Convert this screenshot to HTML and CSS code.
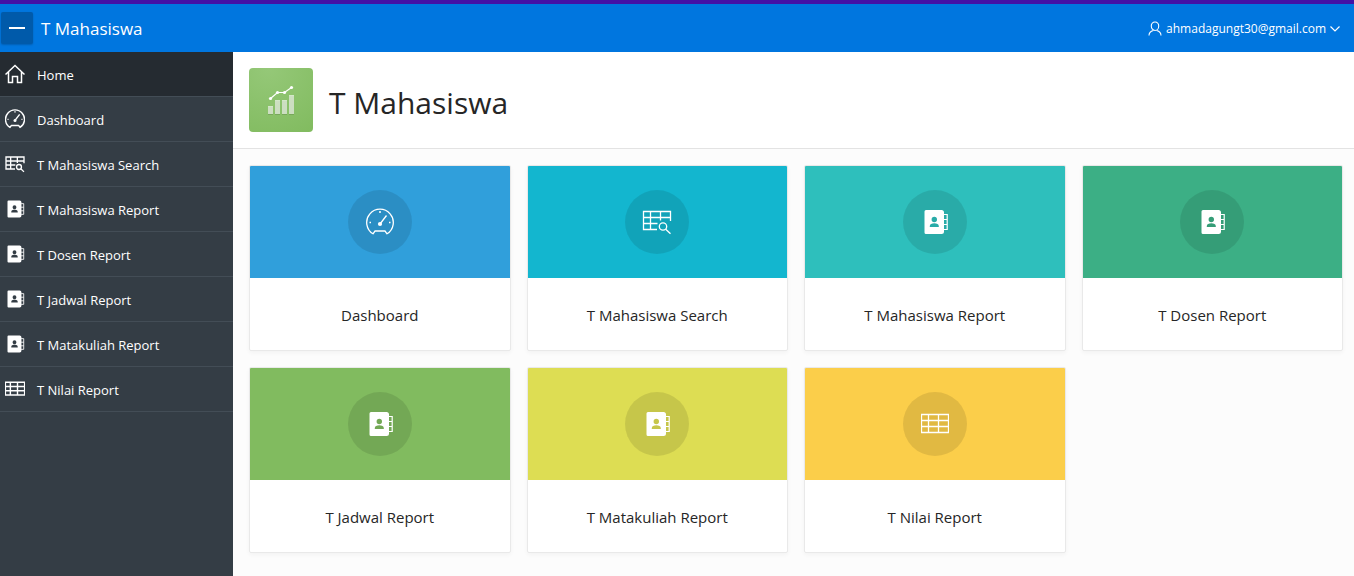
FILE: index.html
```html
<!DOCTYPE html>
<html lang="en">
<head>
<meta charset="utf-8">
<title>T Mahasiswa</title>
<link rel="stylesheet" href="styles.css">
</head>
<body>
<svg class="sprite" aria-hidden="true">
  <symbol id="i-home" viewBox="0 0 20 20"><path d="M.5 10.5 10 1.5l9.500 9M3.500 8v10.500h4V12.500h5v6h4V8" fill="none" stroke="currentColor" stroke-width="1.500"/></symbol>
  <symbol id="i-gauge" viewBox="0 0 28 28"><path d="M7 25.800A13.300 13.300 0 1 1 21 25.800L19 23H9Z" fill="none" stroke="currentColor" stroke-linejoin="round"/><path d="M14 16 20.500 7.500M13 4h2M3.500 14.500h1.500M23 14.500h1.500" fill="none" stroke="currentColor"/><circle cx="14" cy="16" r="2.100" fill="currentColor"/></symbol>
  <symbol id="i-search" viewBox="0 0 30 28"><path d="M15 21.500H1.500v-18h27v9.500M1.500 9.500h27M1.500 15.500h14M8.500 3.500v18M18.500 3.500v9" fill="none" stroke="currentColor"/><circle cx="21" cy="18.500" r="3.700" fill="none" stroke="currentColor"/><path d="m23.700 21.200 4.800 4.600" stroke="currentColor"/></symbol>
  <symbol id="i-book" viewBox="0 0 28 28"><path fill="currentColor" fill-rule="evenodd" d="M5 2h15.500a2.500 2.500 0 0 1 2.500 2.500v19a2.500 2.500 0 0 1-2.500 2.500H5a1.500 1.500 0 0 1-1.500-1.500v-21A1.500 1.500 0 0 1 5 2Zm8.300 6.800a2.700 2.700 0 1 0 0 5.400 2.700 2.700 0 1 0 0-5.400ZM8.800 19h9v-1c0-2-2-2.800-4.500-2.800s-4.500.8-4.500 2.800Z"/><path d="M22.500 6.500h3.700v15h-3.700M22.500 11.500h3.700M22.500 16.500h3.700" fill="none" stroke="currentColor" stroke-width="1.200"/></symbol>
  <symbol id="i-table" viewBox="0 0 28 20"><path d="M.5 .5h27v18H.5ZM.5 6.500h27M.5 12.500h27M7.500.5v18M17.500.5v18" fill="none" stroke="currentColor"/></symbol>
  <symbol id="i-user" viewBox="0 0 14 16"><path d="M7 1a3.700 3.700 0 0 1 3.700 4.200C10.700 7.500 9 9.500 7 9.500S3.300 7.500 3.300 5.200A3.700 3.700 0 0 1 7 1ZM5.300 9.500c-2.800.8-4.300 2-4.300 5M8.700 9.500c2.800.8 4.300 2 4.300 5" fill="none" stroke="currentColor" stroke-width="1.100"/></symbol>
</svg>

<header class="topbar">
  <button class="toggle" type="button" aria-label="Toggle navigation"><span class="toggle-bar"></span></button>
  <a class="brand" href="#">T Mahasiswa</a>
  <button class="account" type="button">
    <svg class="account-icon"><use href="#i-user"/></svg>
    <span>ahmadagungt30@gmail.com</span>
    <svg class="chevron" viewBox="0 0 10 6"><path d="m.5.500 4.500 4.500L9.500.500" fill="none" stroke="currentColor" stroke-width="1.200"/></svg>
  </button>
</header>

<div class="layout">
  <nav class="sidebar">
    <a class="nav-item current" href="#"><svg class="nav-icon"><use href="#i-home"/></svg><span class="nav-label">Home</span></a>
    <a class="nav-item" href="#"><svg class="nav-icon"><use href="#i-gauge"/></svg><span class="nav-label">Dashboard</span></a>
    <a class="nav-item" href="#"><svg class="nav-icon"><use href="#i-search"/></svg><span class="nav-label">T Mahasiswa Search</span></a>
    <a class="nav-item" href="#"><svg class="nav-icon"><use href="#i-book"/></svg><span class="nav-label">T Mahasiswa Report</span></a>
    <a class="nav-item" href="#"><svg class="nav-icon"><use href="#i-book"/></svg><span class="nav-label">T Dosen Report</span></a>
    <a class="nav-item" href="#"><svg class="nav-icon"><use href="#i-book"/></svg><span class="nav-label">T Jadwal Report</span></a>
    <a class="nav-item" href="#"><svg class="nav-icon"><use href="#i-book"/></svg><span class="nav-label">T Matakuliah Report</span></a>
    <a class="nav-item" href="#"><svg class="nav-icon"><use href="#i-table"/></svg><span class="nav-label">T Nilai Report</span></a>
  </nav>

  <main class="content">
    <div class="hero">
      <div class="hero-icon">
        <svg viewBox="0 0 64 64"><g fill="#000" opacity=".12"><path d="M19 39h5v8h-5zM26 33h5v14h-5zM33 33h5v14h-5zM40 28h5v19h-5z"/></g><g fill="#fff" opacity=".62"><path d="M19 38h5v8h-5zM26 32h5v14h-5zM33 32h5v14h-5zM40 27h5v19h-5z"/></g><path d="m21.500 30.500 7-6h7l7-5" fill="none" stroke="#fff" stroke-width="1.200"/><g fill="#fff"><circle cx="21.500" cy="30.500" r="1.600"/><circle cx="28.500" cy="24.500" r="1.600"/><circle cx="35.500" cy="24.500" r="1.600"/><circle cx="42.500" cy="19.500" r="1.600"/></g></svg>
      </div>
      <h1 class="hero-title">T Mahasiswa</h1>
    </div>

    <div class="cards">
      <a class="card" href="#"><span class="card-head blue"><span class="disc"><svg class="card-icon"><use href="#i-gauge"/></svg></span></span><span class="card-title">Dashboard</span></a>
      <a class="card" href="#"><span class="card-head cyan"><span class="disc"><svg class="card-icon wide"><use href="#i-search"/></svg></span></span><span class="card-title">T Mahasiswa Search</span></a>
      <a class="card" href="#"><span class="card-head teal"><span class="disc"><svg class="card-icon"><use href="#i-book"/></svg></span></span><span class="card-title">T Mahasiswa Report</span></a>
      <a class="card" href="#"><span class="card-head green"><span class="disc"><svg class="card-icon"><use href="#i-book"/></svg></span></span><span class="card-title">T Dosen Report</span></a>
      <a class="card" href="#"><span class="card-head leaf"><span class="disc"><svg class="card-icon"><use href="#i-book"/></svg></span></span><span class="card-title">T Jadwal Report</span></a>
      <a class="card" href="#"><span class="card-head lime"><span class="disc"><svg class="card-icon"><use href="#i-book"/></svg></span></span><span class="card-title">T Matakuliah Report</span></a>
      <a class="card" href="#"><span class="card-head yellow"><span class="disc"><svg class="card-icon"><use href="#i-table"/></svg></span></span><span class="card-title">T Nilai Report</span></a>
    </div>
  </main>
</div>
</body>
</html>
```
FILE: styles.css
```css
* {
  box-sizing: border-box;
}

body {
  margin: 0;
  min-height: 100vh;
  display: flex;
  flex-direction: column;
  background: #fcfcfc;
  color: #262626;
  font-family: "Open Sans", "Noto Sans", sans-serif;
  font-size: 14px;
}

a {
  color: inherit;
  text-decoration: none;
}

button {
  border: 0;
  font: inherit;
  color: inherit;
  cursor: pointer;
}

.sprite {
  display: none;
}

.topbar {
  display: flex;
  align-items: center;
  height: 52px;
  padding: 0 14px 0 1px;
  border-top: 4px solid #4411a5;
  background: #0076df;
  color: #fff;
}

.toggle {
  display: flex;
  align-items: center;
  justify-content: center;
  width: 32px;
  height: 32px;
  padding: 0;
  border-radius: 2px;
  background: #005aaa;
  box-shadow: 0 1px 2px rgba(0, 0, 0, 0.2);
}

.toggle-bar {
  width: 16px;
  height: 2px;
  background: #fff;
}

.brand {
  margin-left: 8px;
  padding-top: 2px;
  font-size: 17px;
  line-height: 24px;
}

.account {
  display: flex;
  align-items: center;
  gap: 4px;
  margin-left: auto;
  padding: 2px 0 0;
  background: none;
  font-size: 12px;
  line-height: 16px;
}

.account-icon {
  width: 14px;
  height: 16px;
}

.chevron {
  width: 10px;
  height: 6px;
}

.layout {
  flex: 1;
  display: flex;
}

.sidebar {
  flex: 0 0 233px;
  background: #343d45;
  color: #fff;
}

.nav-item {
  display: flex;
  align-items: center;
  gap: 12px;
  height: 45px;
  padding-left: 5px;
  border-bottom: 1px solid #434d56;
  font-size: 13px;
  line-height: 20px;
}

.nav-label {
  padding-top: 2px;
}

.nav-item.current {
  background: #252b31;
}

.nav-icon {
  width: 20px;
  height: 20px;
  overflow: visible;
  stroke-width: 2px;
}

.content {
  flex: 1;
  min-width: 0;
}

.hero {
  display: flex;
  align-items: center;
  gap: 16px;
  padding: 16px;
  border-bottom: 1px solid #e3e3e3;
  background: #fff;
}

.hero-icon {
  width: 64px;
  height: 64px;
  border-radius: 4px;
  background: radial-gradient(circle at 30% 0, #95c878, #81bb5f);
}

.hero-icon svg {
  display: block;
}

.hero-title {
  margin: 6px 0 0;
  font-size: 30px;
  line-height: 40px;
  font-weight: 400;
}

.cards {
  display: grid;
  grid-template-columns: repeat(4, 1fr);
  gap: 16px;
  padding: 16px 11px 16px 16px;
}

.card {
  display: flex;
  flex-direction: column;
  overflow: hidden;
  border: 1px solid #e9e9e9;
  border-radius: 2px;
  background: #fff;
  box-shadow: 0 2px 4px rgba(0, 0, 0, 0.04);
}

.card-head {
  display: flex;
  align-items: center;
  justify-content: center;
  height: 112px;
  color: #fff;
}

.disc {
  display: flex;
  align-items: center;
  justify-content: center;
  width: 64px;
  height: 64px;
  border-radius: 50%;
  background: rgba(0, 0, 0, 0.1);
}

.card-icon {
  width: 28px;
  height: 28px;
  stroke-width: 1.3;
}

.card-icon.wide {
  width: 30px;
}

.card-title {
  padding: 25px 16px 23px;
  font-size: 15px;
  line-height: 24px;
  text-align: center;
}

.blue { background: #309fdb; }
.cyan { background: #13b6cf; }
.teal { background: #2ebfbc; }
.green { background: #3caf85; }
.leaf { background: #81bb5f; }
.lime { background: #dddd53; }
.yellow { background: #fbce4a; }
```
